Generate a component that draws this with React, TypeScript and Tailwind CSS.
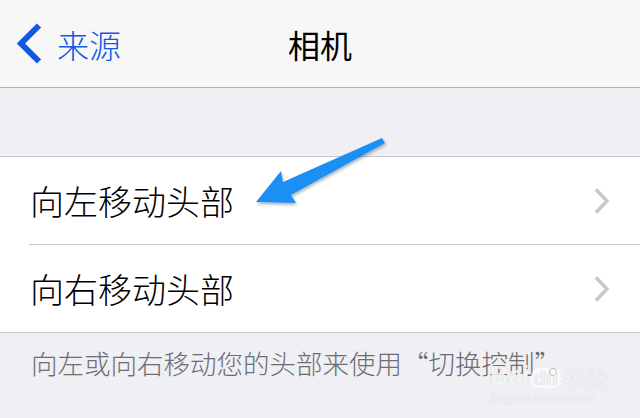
import React from "react";

const cjk = { fontFamily: '"Noto Sans CJK SC", "Noto Sans", sans-serif' };

function ChevronRight() {
  return (
    <svg width="16" height="26" viewBox="0 0 16 26" className="shrink-0">
      <polyline points="2,1.5 13,13 2,24.5" fill="none" stroke="#c7c7cc" strokeWidth="3.4" />
    </svg>
  );
}

function Row({ label }: { label: string }) {
  return (
    <div className="flex h-[87px] items-center justify-between pl-[30px] pr-[30px]">
      <span className="text-[34px] font-light leading-none text-black">{label}</span>
      <ChevronRight />
    </div>
  );
}

export default function App() {
  return (
    <div className="relative h-[418px] w-[640px] overflow-hidden bg-[#efeff4]" style={cjk}>
      {/* nav bar */}
      <div className="grid h-[88px] grid-cols-[1fr_auto_1fr] items-center border-b border-[#b2b2b2] bg-[#f7f7f8]">
        <div className="flex items-center pl-[16px]">
          <svg width="27" height="41" viewBox="0 0 27 41">
            <polyline points="23,2.5 5,20.5 23,38.5" fill="none" stroke="#1058e4" strokeWidth="6" />
          </svg>
          <span className="ml-[14px] text-[32px] font-light leading-none text-[#1058e4]">来源</span>
        </div>
        <span className="text-[32px] font-normal leading-none text-black">相机</span>
        <div />
      </div>

      {/* spacer */}
      <div className="h-[68px]" />

      {/* group */}
      <div className="border-y border-[#c8c7cc] bg-white">
        <Row label="向左移动头部" />
        <div className="ml-[29px] h-px bg-[#c8c7cc]" />
        <Row label="向右移动头部" />
      </div>

      {/* footer */}
      <div className="pl-[31px] pt-[12px]">
        <span className="whitespace-nowrap text-[26.5px] font-light leading-[36px] text-[#6d6d72]">向左或向右移动您的头部来使用“切换控制”。</span>
      </div>

      {/* watermark */}
      <div className="absolute left-[490px] top-[362px] flex flex-col items-start text-white/80 [text-shadow:0_0_1px_rgba(140,140,140,0.45)]">
        <div className="flex items-end leading-none" style={{ fontFamily: '"Liberation Sans", "Noto Sans CJK SC", sans-serif' }}>
          <span className="text-[26px] font-bold tracking-tight">Bai</span>
          <span className="ml-[2px] rounded-[8px] bg-white/60 px-[3px] text-[20px] font-bold text-[#efeff4]">du</span>
          <span className="ml-[3px] text-[22px]" style={cjk}>经验</span>
        </div>
        <span className="mt-[3px] text-[13px] leading-none" style={{ fontFamily: '"Liberation Sans", sans-serif' }}>jingyan.baidu.com</span>
      </div>

      {/* annotation arrow */}
      <svg className="pointer-events-none absolute left-0 top-0" width="640" height="418" viewBox="0 0 640 418">
        <defs>
          <filter id="sh" x="-20%" y="-20%" width="140%" height="140%">
            <feDropShadow dx="1" dy="2" stdDeviation="1.5" floodColor="#000" floodOpacity="0.3" />
          </filter>
        </defs>
        <polygon
          points="256,202 281,171 283,182 382,138 385,143 291,195 296,203"
          fill="#1e8ff5"
          filter="url(#sh)"
        />
      </svg>
    </div>
  );
}
